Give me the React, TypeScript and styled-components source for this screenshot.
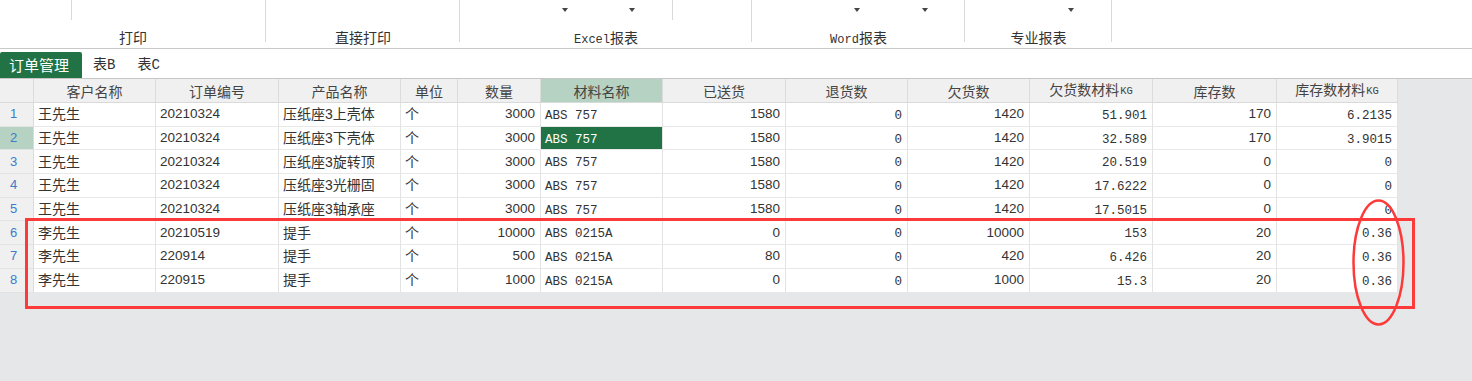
import React from 'react';
import styled, { createGlobalStyle, css } from 'styled-components';

const GlobalStyle = createGlobalStyle`
  html, body { margin: 0; padding: 0; }
  body {
    background: #e6e7e9;
    font-family: "Noto Sans CJK SC", "Noto Sans", sans-serif;
  }
`;

const CJK = `"Noto Sans CJK SC", "Noto Sans", sans-serif`;
const SANS = `"Liberation Sans", "Noto Sans CJK SC", sans-serif`;
const MONO = `"Liberation Mono", "Noto Sans CJK SC", monospace`;

const Page = styled.div`
  position: relative;
  width: 1472px;
  height: 381px;
  overflow: hidden;
  background: #e6e7e9;
  display: flex;
  flex-direction: column;
`;

/* ---------- ribbon ---------- */
const Ribbon = styled.div`
  height: 48px;
  flex: none;
  background: #fff;
  border-bottom: 1px solid #c9c9c9;
  display: flex;
`;

const Group = styled.div<{ $w: number }>`
  position: relative;
  box-sizing: border-box;
  width: ${p => p.$w}px;
  height: 48px;
  display: flex;
  flex-direction: column;
  &::after {
    content: '';
    position: absolute;
    right: 0;
    top: 0;
    width: 1px;
    height: 42px;
    background: #d9d9d9;
  }
`;

const TopRow = styled.div`
  height: 20px;
  display: flex;
`;

const Slot = styled.div<{ $w?: number; $sep?: boolean; $pad?: number; $gap?: number }>`
  box-sizing: border-box;
  width: ${p => (p.$w ? `${p.$w}px` : 'auto')};
  height: 20px;
  display: flex;
  align-items: flex-start;
  padding-top: 8px;
  padding-left: ${p => p.$pad ?? 0}px;
  gap: ${p => p.$gap ?? 0}px;
  border-right: ${p => (p.$sep ? '1px solid #d9d9d9' : 'none')};
`;

const Caret = styled.span`
  width: 0;
  height: 0;
  border-left: 3px solid transparent;
  border-right: 3px solid transparent;
  border-top: 4px solid #444;
`;

const GroupLabel = styled.div`
  flex: 1;
  padding-top: 7px;
  text-align: center;
  font-family: ${CJK};
  font-size: 14px;
  line-height: 20px;
  color: #333;
`;

const Ascii = styled.span`
  font-family: "Liberation Mono", monospace;
  font-size: 12px;
`;

/* ---------- tabs ---------- */
const TabBar = styled.div`
  height: 29px;
  flex: none;
  background: #fff;
  border-bottom: 1px solid #c6c6c6;
  display: flex;
  align-items: flex-end;
`;

const Tab = styled.div<{ $active?: boolean }>`
  box-sizing: border-box;
  height: 26px;
  line-height: 26px;
  padding: 0 11px;
  font-family: ${MONO};
  font-size: 14px;
  color: #333;
  white-space: nowrap;
  ${p =>
    p.$active &&
    css`
      width: 82px;
      padding: 0 0 0 9px;
      background: #217346;
      color: #fff;
      font-family: ${CJK};
      font-size: 15px;
      border-radius: 2px 2px 0 0;
    `}
`;

/* ---------- sheet ---------- */
const Sheet = styled.div`
  flex: 1;
  background: #e6e7e9;
`;

type Kind = 'text' | 'numL' | 'num' | 'monoL' | 'monoR';

const widths = [34, 122, 123, 122, 57, 83, 122, 123, 122, 122, 123, 124, 121];

const Table = styled.div`
  display: grid;
  width: fit-content;
  grid-template-columns: ${widths.map(w => `${w}px`).join(' ')};
  grid-template-rows: 24px repeat(8, 23.7px);
`;

const kindFont = (k: Kind) => {
  switch (k) {
    case 'text':
      return css`font-family: ${SANS}; font-size: 14px;`;
    case 'numL':
    case 'num':
      return css`font-family: ${SANS}; font-size: 13.5px;`;
    default:
      return css`
        font-family: "Liberation Mono", monospace;
        font-size: 12.5px;
        padding-top: 3px;
      `;
  }
};

const HeadCell = styled.div<{ $sel?: boolean }>`
  box-sizing: border-box;
  display: flex;
  align-items: center;
  justify-content: center;
  background: ${p => (p.$sel ? '#b6d2c2' : '#f0f0f0')};
  border-right: 1px solid #dcdcdc;
  border-bottom: 1px solid #dadada;
  font-family: ${CJK};
  font-size: 14px;
  line-height: 20px;
  color: #444;
  white-space: nowrap;
`;

const HeadText = styled.span`
  line-height: 20px;
`;

const Unit = styled.span`
  font-family: "Liberation Mono", monospace;
  font-size: 10.5px;
  margin-left: 1px;
  position: relative;
  top: -1px;
`;

const RowHead = styled.div<{ $sel?: boolean }>`
  box-sizing: border-box;
  display: flex;
  align-items: center;
  padding-left: 10px;
  background: ${p => (p.$sel ? '#b6d2c2' : '#f0f0f0')};
  border-right: 1px solid #dcdcdc;
  border-bottom: 1px solid #e3e3e3;
  font-family: ${SANS};
  font-size: 13px;
  line-height: 18px;
  color: #3d7cc9;
`;

const Cell = styled.div<{ $kind: Kind; $sel?: boolean }>`
  box-sizing: border-box;
  display: flex;
  align-items: center;
  justify-content: ${p => (p.$kind === 'num' || p.$kind === 'monoR' ? 'flex-end' : 'flex-start')};
  padding: 0 5px 0 4px;
  background: ${p => (p.$sel ? '#217346' : '#fff')};
  color: ${p => (p.$sel ? '#fff' : '#333')};
  border-right: 1px solid #e3e3e3;
  border-bottom: 1px solid #e8e8e8;
  white-space: nowrap;
  overflow: hidden;
  line-height: 18px;
  ${p => kindFont(p.$kind)}
`;

/* ---------- annotation ---------- */
const Annotation = styled.svg`
  position: absolute;
  left: 0;
  top: 0;
  pointer-events: none;
`;

const columns: { title: React.ReactNode; kind: Kind }[] = [
  { title: '客户名称', kind: 'text' },
  { title: '订单编号', kind: 'numL' },
  { title: '产品名称', kind: 'text' },
  { title: '单位', kind: 'text' },
  { title: '数量', kind: 'num' },
  { title: '材料名称', kind: 'monoL' },
  { title: '已送货', kind: 'num' },
  { title: '退货数', kind: 'monoR' },
  { title: '欠货数', kind: 'num' },
  { title: <>欠货数材料<Unit>KG</Unit></>, kind: 'monoR' },
  { title: '库存数', kind: 'num' },
  { title: <>库存数材料<Unit>KG</Unit></>, kind: 'monoR' },
];

const rows: string[][] = [
  ['王先生', '20210324', '压纸座3上壳体', '个', '3000', 'ABS 757', '1580', '0', '1420', '51.901', '170', '6.2135'],
  ['王先生', '20210324', '压纸座3下壳体', '个', '3000', 'ABS 757', '1580', '0', '1420', '32.589', '170', '3.9015'],
  ['王先生', '20210324', '压纸座3旋转顶', '个', '3000', 'ABS 757', '1580', '0', '1420', '20.519', '0', '0'],
  ['王先生', '20210324', '压纸座3光栅固', '个', '3000', 'ABS 757', '1580', '0', '1420', '17.6222', '0', '0'],
  ['王先生', '20210324', '压纸座3轴承座', '个', '3000', 'ABS 757', '1580', '0', '1420', '17.5015', '0', '0'],
  ['李先生', '20210519', '提手', '个', '10000', 'ABS 0215A', '0', '0', '10000', '153', '20', '0.36'],
  ['李先生', '220914', '提手', '个', '500', 'ABS 0215A', '80', '0', '420', '6.426', '20', '0.36'],
  ['李先生', '220915', '提手', '个', '1000', 'ABS 0215A', '0', '0', '1000', '15.3', '20', '0.36'],
];

const SEL_ROW = 1;
const SEL_COL = 5;

export default function App() {
  return (
    <Page>
      <GlobalStyle />
      <Ribbon>
        <Group $w={266}>
          <TopRow>
            <Slot $w={72} $sep />
          </TopRow>
          <GroupLabel>打印</GroupLabel>
        </Group>
        <Group $w={194}>
          <TopRow />
          <GroupLabel>直接打印</GroupLabel>
        </Group>
        <Group $w={292}>
          <TopRow>
            <Slot $w={213} $sep $pad={102} $gap={61}>
              <Caret />
              <Caret />
            </Slot>
          </TopRow>
          <GroupLabel>
            <Ascii>Excel</Ascii>报表
          </GroupLabel>
        </Group>
        <Group $w={213}>
          <TopRow>
            <Slot $pad={102} $gap={62}>
              <Caret />
              <Caret />
            </Slot>
          </TopRow>
          <GroupLabel>
            <Ascii>Word</Ascii>报表
          </GroupLabel>
        </Group>
        <Group $w={147}>
          <TopRow>
            <Slot $pad={103}>
              <Caret />
            </Slot>
          </TopRow>
          <GroupLabel>专业报表</GroupLabel>
        </Group>
      </Ribbon>

      <TabBar>
        <Tab $active>订单管理</Tab>
        <Tab>表B</Tab>
        <Tab>表C</Tab>
      </TabBar>

      <Sheet>
        <Table>
          <HeadCell />
          {columns.map((c, i) => (
            <HeadCell key={i} $sel={i === SEL_COL}>
              <HeadText>{c.title}</HeadText>
            </HeadCell>
          ))}
          {rows.map((r, ri) => (
            <React.Fragment key={ri}>
              <RowHead $sel={ri === SEL_ROW}>{ri + 1}</RowHead>
              {r.map((v, ci) => (
                <Cell key={ci} $kind={columns[ci].kind} $sel={ri === SEL_ROW && ci === SEL_COL}>
                  {v}
                </Cell>
              ))}
            </React.Fragment>
          ))}
        </Table>
      </Sheet>

      <Annotation width="1472" height="381" viewBox="0 0 1472 381">
        <rect x="26.5" y="219.5" width="1387" height="88" fill="none" stroke="#fd3a3a" strokeWidth="3" />
        <ellipse cx="1378.5" cy="262.5" rx="25" ry="62" fill="none" stroke="#fd3a3a" strokeWidth="2.5" />
      </Annotation>
    </Page>
  );
}
